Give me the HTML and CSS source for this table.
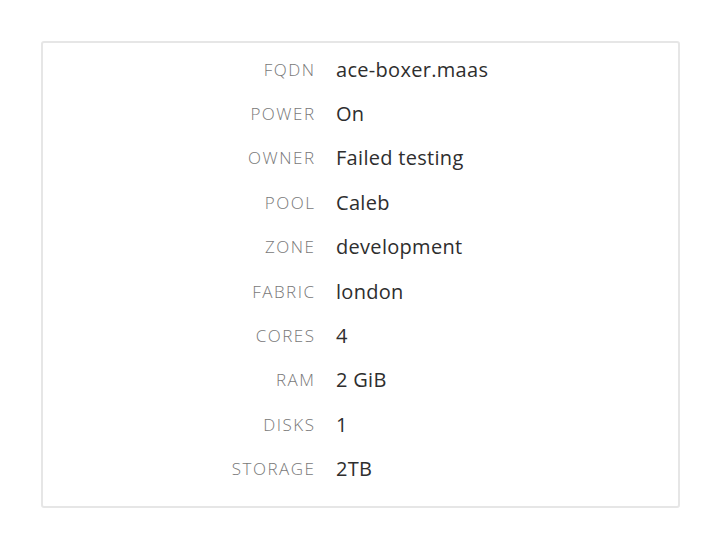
FILE: index.html
```html
<!DOCTYPE html>
<html>
<head>
<meta charset="utf-8">
<link rel="stylesheet" href="styles.css">
</head>
<body>
<div class="card">
  <dl class="details">
    <div class="row"><dt>FQDN</dt><dd>ace-boxer.maas</dd></div>
    <div class="row"><dt>Power</dt><dd>On</dd></div>
    <div class="row"><dt>Owner</dt><dd>Failed testing</dd></div>
    <div class="row"><dt>Pool</dt><dd>Caleb</dd></div>
    <div class="row"><dt>Zone</dt><dd>development</dd></div>
    <div class="row"><dt>Fabric</dt><dd>london</dd></div>
    <div class="row"><dt>Cores</dt><dd>4</dd></div>
    <div class="row"><dt>RAM</dt><dd>2 GiB</dd></div>
    <div class="row"><dt>Disks</dt><dd>1</dd></div>
    <div class="row"><dt>Storage</dt><dd>2TB</dd></div>
  </dl>
</div>
</body>
</html>
```
FILE: styles.css
```css
html, body {
  margin: 0;
  padding: 0;
  background: #ffffff;
}
body {
  padding: 41px 0 0 41px;
  font-family: "Open Sans", "Noto Sans", sans-serif;
}
.card {
  box-sizing: border-box;
  width: 639px;
  height: 467px;
  border: 2px solid #e6e6e6;
  border-radius: 3px;
  padding: 4px 0 0 0;
}
.details {
  margin: 0;
  display: flex;
  flex-direction: column;
}
.row {
  display: grid;
  grid-template-columns: 272px 1fr;
  column-gap: 21px;
  align-items: center;
  height: 44.4px;
}
dt {
  text-align: right;
  text-transform: uppercase;
  font-size: 17px;
  font-weight: 300;
  color: #787878;
  letter-spacing: 1.5px;
  margin-right: -0.5px;
}
dd {
  margin: 0;
  font-size: 20px;
  letter-spacing: 0.3px;
  color: #2e2e2e;
}
```
